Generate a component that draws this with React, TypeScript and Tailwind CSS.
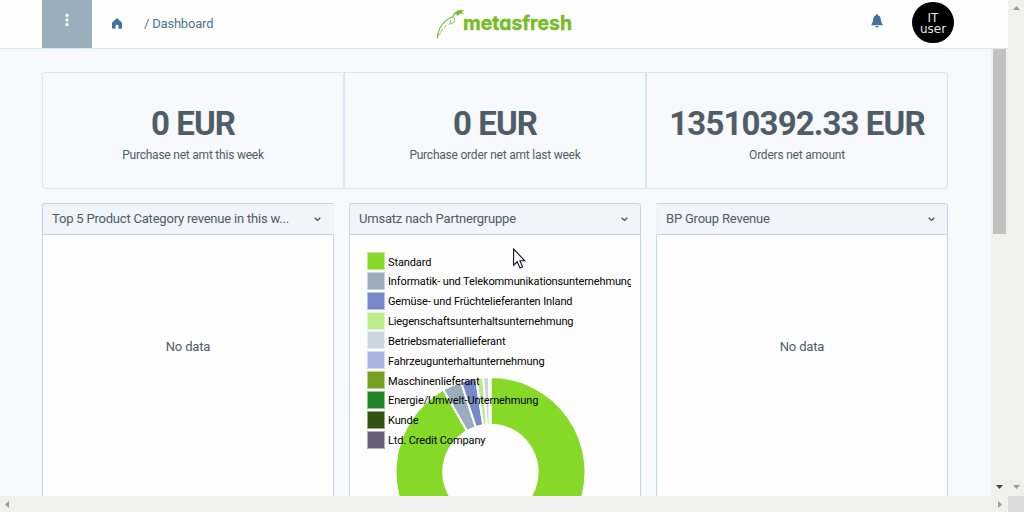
import React from "react";

const kpis = [
  { value: "0 EUR", label: "Purchase net amt this week", rounded: "rounded-l-[3px]" },
  { value: "0 EUR", label: "Purchase order net amt last week", rounded: "" },
  { value: "13510392.33 EUR", label: "Orders net amount", rounded: "rounded-r-[3px]" },
];

const legend = [
  { name: "Standard", color: "bg-[#86d926]" },
  { name: "Informatik- und Telekommunikationsunternehmung", color: "bg-[#9aadbd]" },
  { name: "Gemüse- und Früchtelieferanten Inland", color: "bg-[#7688c9]" },
  { name: "Liegenschaftsunterhaltsunternehmung", color: "bg-[#bcec8a]" },
  { name: "Betriebsmateriallieferant", color: "bg-[#c9d5df]" },
  { name: "Fahrzeugunterhaltunternehmung", color: "bg-[#a9b4e2]" },
  { name: "Maschinenlieferant", color: "bg-[#74a01d]" },
  { name: "Energie/Umwelt-Unternehmung", color: "bg-[#22842a]" },
  { name: "Kunde", color: "bg-[#32520f]" },
  { name: "Ltd. Credit Company", color: "bg-[#655f78]" },
];

const slices = [
  { from: 0, to: 330.2, fill: "#86d926" },
  { from: 330.2, to: 341.9, fill: "#9aadbd" },
  { from: 341.9, to: 351.2, fill: "#7688c9" },
  { from: 351.2, to: 355.6, fill: "#bcec8a" },
  { from: 355.6, to: 359.2, fill: "#c9d5df" },
  { from: 359.2, to: 360, fill: "#ffffff" },
];

function arc(from: number, to: number, outer: number, inner: number) {
  const p = (r: number, deg: number) => {
    const a = (deg * Math.PI) / 180;
    return `${r * Math.sin(a)} ${-r * Math.cos(a)}`;
  };
  const large = to - from > 180 ? 1 : 0;
  return `M${p(outer, from)}A${outer} ${outer} 0 ${large} 1 ${p(outer, to)}L${p(inner, to)}A${inner} ${inner} 0 ${large} 0 ${p(inner, from)}Z`;
}

function Header() {
  return (
    <header className="flex h-[49px] w-[1008px] shrink-0 border-b border-[#d7e6ef] bg-[#fefefe] pl-[42px]">
      <button className="flex h-12 w-[50px] justify-center bg-[#9aadbb] pt-[13px]">
        <svg width="6" height="14" viewBox="0 0 6 14" fill="#fff">
          <circle cx="3" cy="2.3" r="1.7" />
          <circle cx="3" cy="7" r="1.7" />
          <circle cx="3" cy="11.6" r="1.7" />
        </svg>
      </button>
      <div className="flex h-12 w-[344px] items-center pl-5 text-[13px] tracking-[-0.2px] text-[#4d7593]">
        <svg className="mb-[2px]" width="10" height="11" viewBox="0 0 10 11" fill="#41739d">
          <path d="M5 0 10 4.8V9.6Q10 10.8 8.8 10.8H6.5V8.2Q6.5 6.8 5 6.8T3.5 8.2V10.8H1.2Q0 10.8 0 9.6V4.8Z" />
        </svg>
        <span className="pl-[22px]">/ Dashboard</span>
      </div>
      <svg width="140" height="48" viewBox="436 0 140 48">
        <g fill="none" stroke="#77bc27" strokeLinecap="round">
          <path d="M437.5 37.5C438 29 443 21 452 17" strokeWidth="1.3" />
          <path d="M452 17Q455.5 18 454.2 21.5Q453 24 450.5 24M450.5 20.5Q451 23 449 24.5M446 25.5Q445.5 27 444.5 27.5M442.5 29.5Q442.5 31 441 31.5M440.5 33Q440 34.5 439 35" strokeWidth=".9" />
          <path d="M453 16.5Q454 13 457 13" strokeWidth="1.2" />
        </g>
        <path d="M453.5 13.5 458 10.2 464.5 10 461.5 12 464 13.4 460 13.8 457 16.2 456.5 14Z" fill="#77bc27" />
        <text x="463" y="30.2" textLength="109" lengthAdjust="spacingAndGlyphs" fontFamily="Inter" fontSize="20" fontWeight="700" fill="#77bc27" stroke="#77bc27" strokeWidth=".4" className="[font-feature-settings:'cv11']">metasfresh</text>
      </svg>
      <div className="flex flex-1 items-start justify-end pr-[54px]">
        <svg className="mt-[14px] mr-[29px]" width="12" height="14" viewBox="0 0 12 14" fill="#41739d">
          <path d="M6 0Q7 0 7 1.3Q9.6 2 9.8 5.1Q9.9 8.3 11.6 10.5V11.3H.4V10.5Q2.1 8.3 2.2 5.1Q2.4 2 5 1.3Q5 0 6 0ZM4.3 12H7.7Q7.4 13.5 6 13.5T4.3 12Z" />
        </svg>
        <div className="mt-[2px] flex h-[41px] w-[42px] flex-col items-center rounded-full bg-black pt-[11px] font-['DejaVu_Sans'] text-[12px] leading-[11px] text-[#e4e4e4]">
          <span>IT</span>
          <span>user</span>
        </div>
      </div>
    </header>
  );
}

function Widget({ title, side, children }: { title: string; side: "left" | "mid" | "right"; children: React.ReactNode }) {
  const edge =
    side === "left"
      ? "border-l border-r border-r-[#edf1f8] rounded-tl-[3px]"
      : side === "right"
        ? "border-r border-l border-l-[#edf1f8] rounded-tr-[3px]"
        : "border-x rounded-t-[3px]";
  return (
    <section className="flex h-[300px] w-[292px] flex-col">
      <div className={`flex h-8 shrink-0 items-center justify-between border-t border-b border-[#c2d5df] bg-[#f1f4fa] pr-3 pl-[9px] text-[13px] tracking-[-0.2px] text-[#4e5c65] ${edge}`}>
        <span>{title}</span>
        <svg width="7" height="5" viewBox="0 0 7 5" fill="none" stroke="#40505b" strokeWidth="1.3">
          <path d="M.7 .8 3.5 3.4 6.3 .8" />
        </svg>
      </div>
      <div className="flex-1 overflow-hidden border-x border-[#c5d6e0] bg-[#fefefe]">{children}</div>
    </section>
  );
}

function NoData() {
  return <p className="pt-[102px] text-center text-[13px] leading-5 tracking-[-0.15px] text-[#4e5c65]">No data</p>;
}

function PartnerChart() {
  return (
    <div className="relative h-full">
      <svg className="absolute top-[137px] left-[40px]" width="201" height="200" viewBox="-100.5 -100 201 200">
        {slices.map((s) => (
          <path key={s.from} d={arc(s.from, s.to, 95, 47.2)} fill={s.fill} stroke="#fefefe" strokeWidth="2" />
        ))}
      </svg>
      <ul className="relative mr-[9px] ml-[17px] flex flex-col gap-[1.85px] overflow-hidden pt-[17px] text-[11px] leading-[18px] tracking-[-0.12px] text-black">
        {legend.map((item) => (
          <li key={item.name} className="flex h-[18px] gap-[3px] whitespace-nowrap">
            <span className={`h-[18px] w-[18px] shrink-0 border border-white/50 ${item.color}`} />
            <span className="pt-[1.5px]">{item.name}</span>
          </li>
        ))}
      </ul>
      <svg className="absolute top-[13px] left-[163px]" width="13" height="21" viewBox="0 0 13 21">
        <path d="M.6 1V17.2L4.2 13.8 7 20 9.6 18.8 6.9 12.8H11.8Z" fill="#fff" stroke="#151225" strokeWidth="1.1" />
      </svg>
    </div>
  );
}

export default function App() {
  return (
    <div className="flex h-[512px] w-[1024px] flex-col overflow-hidden bg-[#f8f9fc] font-[Roboto,sans-serif]">
      <div className="flex h-[496px]">
        <div className="flex w-[1008px] flex-col">
          <Header />
          <div className="flex h-[447px]">
            <main className="flex w-[991px] flex-col gap-[14px] overflow-hidden pt-[23px] pl-[42px]">
              <div className="flex h-[117px] shrink-0">
                {kpis.map((k) => (
                  <div key={k.label} className={`flex w-[302px] flex-col items-center border border-[#d9e5ed] bg-[#f8f9fc] pt-[31px] text-[#4e5d67] ${k.rounded}`}>
                    <strong className="text-[33px] leading-10 font-bold tracking-[-0.88px] whitespace-nowrap">{k.value}</strong>
                    <span className="pt-[2px] text-[12px] leading-[18px] tracking-[-0.22px]">{k.label}</span>
                  </div>
                ))}
              </div>
              <div className="flex gap-[15px]">
                <Widget title="Top 5 Product Category revenue in this w..." side="left"><NoData /></Widget>
                <Widget title="Umsatz nach Partnergruppe" side="mid"><PartnerChart /></Widget>
                <Widget title="BP Group Revenue" side="right"><NoData /></Widget>
              </div>
            </main>
            <div className="flex w-[17px] flex-col items-center justify-between bg-[#f0f0ef] pb-[7px]">
              <div className="h-[185px] w-[13px] bg-[#c1c1c2]" />
              <svg width="7" height="4" fill="#454545"><path d="M0 0H7L3.5 4Z" /></svg>
            </div>
          </div>
        </div>
        <div className="flex w-4 flex-col items-center justify-between bg-[#f0f0ef] pt-[6px] pb-[7px]">
          <svg width="7" height="4" fill="#9d9d9d"><path d="M3.5 0 7 4H0Z" /></svg>
          <svg width="7" height="4" fill="#9d9d9d"><path d="M0 0H7L3.5 4Z" /></svg>
        </div>
      </div>
      <div className="flex h-4 bg-[#f0f0ef]">
        <div className="flex w-[1008px] items-center justify-between pr-[6px] pl-[5px]">
          <svg width="4" height="7" fill="#9d9d9d"><path d="M4 0V7L0 3.5Z" /></svg>
          <svg width="4" height="7" fill="#9d9d9d"><path d="M0 0V7L4 3.5Z" /></svg>
        </div>
        <div className="w-4 bg-[#dcdcdc]" />
      </div>
    </div>
  );
}
